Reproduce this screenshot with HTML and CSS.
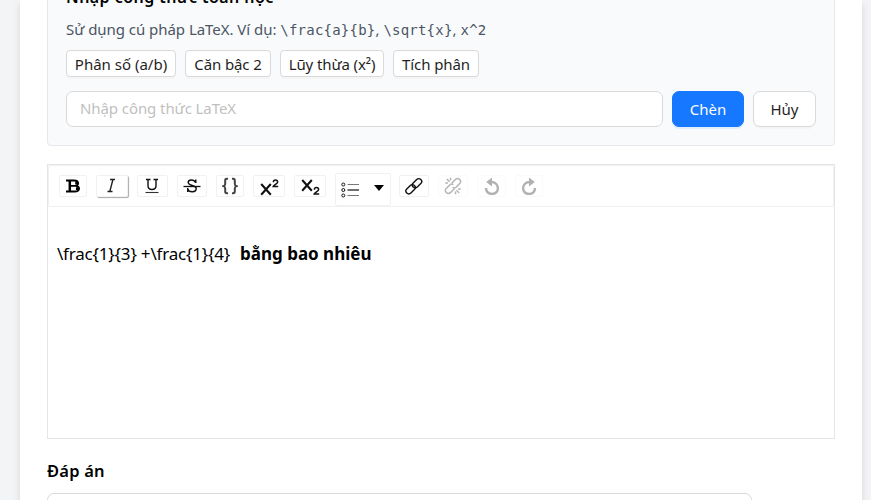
FILE: index.html
```html
<!DOCTYPE html>
<html lang="vi">
<head>
<meta charset="utf-8">
<title>Soạn câu hỏi</title>
<link rel="stylesheet" href="styles.css">
</head>
<body>
<main class="card">
  <section class="panel">
    <h3 class="panel-title">Nhập công thức toán học</h3>
    <p class="hint"><span class="hint-text">Sử dụng cú pháp LaTeX. Ví dụ:</span> <code>\frac{a}{b}</code>, <code>\sqrt{x}</code>, <code>x^2</code></p>
    <div class="presets">
      <button class="btn fraction">Phân số (a/b)</button>
      <button class="btn root">Căn bậc 2</button>
      <button class="btn power">Lũy thừa (x²)</button>
      <button class="btn integral">Tích phân</button>
    </div>
    <div class="entry">
      <input class="field" type="text" placeholder="Nhập công thức LaTeX">
      <button class="btn primary">Chèn</button>
      <button class="btn cancel">Hủy</button>
    </div>
  </section>
  <section class="editor">
    <div class="toolbar">
      <div class="tool w28"><svg width="16" height="14" viewBox="0 0 16 14"><path d="M1 1.5h8.2c5 0 5 5 1.2 5.3 5 .3 5 5.7-.8 5.7H1M4.6 6.9h6" fill="none" stroke="#000" stroke-width="1.9"/><path d="M4.8 1.5v11M11.5 2.8v2.6M12.2 8.3v2.8" stroke="#000" stroke-width="2.5"/></svg></div>
      <div class="tool w32 active"><svg width="12" height="16" viewBox="0 0 12 16"><path d="M4 1.5h5M1.5 13.5h5M6.8 2 3.8 13.5" fill="none" stroke="#222" stroke-width="1.4"/></svg></div>
      <div class="tool w31"><svg class="lift" width="14" height="16" viewBox="0 0 14 16"><path d="M1 1.5h4.5M8.5 1.5H13M3 1.5v6.3c0 5 8 5 8 0V1.5" fill="none" stroke="#111" stroke-width="1.4"/><path d="M.5 14.5h13" stroke="#333" stroke-width="1.1"/></svg></div>
      <div class="tool w30"><svg width="18" height="16" viewBox="0 0 18 16"><path d="M12.8 5V1.5M12.5 4.5C11 1 5.2 1.2 5.2 4.5c0 3.7 8 2.3 8 6 0 4.2-7.2 4.4-8.5.5M4.7 10v4" fill="none" stroke="#111" stroke-width="1.4"/><path d="M.5 8.5h17" stroke="#111" stroke-width="1.3"/></svg></div>
      <div class="tool w28"><svg width="16" height="18" viewBox="0 0 16 18"><path d="M6 1.7H4.8c-1.3 0-1.6.6-1.6 1.8v3.2c0 1.3-.5 2-1.7 2.4 1.2.4 1.7 1.1 1.7 2.4v3c0 1.2.3 1.8 1.6 1.8H6M10 1.7h1.2c1.3 0 1.6.6 1.6 1.8v3.2c0 1.3.5 2 1.7 2.4-1.2.4-1.7 1.1-1.7 2.4v3c0 1.2-.3 1.8-1.6 1.8H10" fill="none" stroke="#444" stroke-width="2"/></svg></div>
      <div class="tool w32"><svg width="20" height="20" viewBox="0 0 20 20"><path d="M2.2 8 11.8 18.7M11.8 8 2.2 18.7" fill="none" stroke="#111" stroke-width="2.1"/><path d="M14.4 6.2c0-2.8 4.2-2.8 4.2 0 0 1.5-3.5 2.6-4.3 4.2h4.9" fill="none" stroke="#111" stroke-width="1.5"/></svg></div>
      <div class="tool w32"><svg width="20" height="20" viewBox="0 0 20 20"><path d="M2.2 4 11.8 14.7M11.8 4 2.2 14.7" fill="none" stroke="#111" stroke-width="2.1"/><path d="M14.4 13.7c0-2.8 4.2-2.8 4.2 0 0 1.5-3.5 2.6-4.3 4.2h4.9" fill="none" stroke="#111" stroke-width="1.5"/></svg></div>
      <div class="tool list"><svg width="19" height="16" viewBox="0 0 19 16"><g fill="none" stroke="#111"><circle cx="2.3" cy="2.5" r="1.5"/><circle cx="2.3" cy="8" r="1.5"/><circle cx="2.3" cy="13.5" r="1.5"/></g><path d="M6.5 2.5H18M6.5 13.5H18" stroke="#777" stroke-width="1.2"/><path d="M6.5 8H18" stroke="#111" stroke-width="1.2"/></svg><svg width="10" height="6" viewBox="0 0 10 6"><path d="M0 0h10L5 6z"/></svg></div>
      <div class="tool w30"><svg width="18" height="18" viewBox="0 0 18 18"><g fill="none" stroke="#111" stroke-width="1.4"><rect x="-5.4" y="-2.9" width="10.8" height="5.8" rx="2.9" transform="translate(12 6.3) rotate(-45)"/><rect x="-5.4" y="-2.9" width="10.8" height="5.8" rx="2.9" transform="translate(5.6 12.3) rotate(-45)"/></g></svg></div>
      <div class="tool w30 disabled"><svg width="18" height="18" viewBox="0 0 18 18"><g fill="none" stroke="#111" stroke-width="1.5"><path d="m7.7 6.3 3.6-3.7c2.9-2.6 7 .8 4.4 4L12 10.2c-1 .9-2.4.9-3.4.2M10.3 11.7l-3.6 3.7c-2.9 2.6-7-.8-4.4-4L6 7.8c1-.9 2.4-.9 3.4-.2M5.5 4.7 2.8 2M6.5 3.5V.8M4 6H1.2M12.5 13.3l2.7 2.7M11.5 14.5v2.7M14 12h2.8"/></g></svg></div>
      <div class="tool w29 disabled"><svg width="16" height="18" viewBox="0 0 16 18"><path d="M7 5c9 0 9 12 1 12-4 0-6-3-6-6" fill="none" stroke="#000" stroke-width="2.4"/><path d="M8 .5v9L2.2 5z"/></svg></div>
      <div class="tool w28 disabled"><svg width="16" height="18" viewBox="0 0 16 18"><path d="M9 5c-9 0-9 12-1 12 4 0 6-3 6-6" fill="none" stroke="#000" stroke-width="2.4"/><path d="M8 .5v9l5.8-4.5z"/></svg></div>
    </div>
    <div class="content"><span class="formula">\frac{1}{3} +\frac{1}{4}</span><strong>bằng bao nhiêu</strong></div>
  </section>
  <label class="answer-label" for="answer">Đáp án</label>
  <input class="field answer" id="answer" type="text">
</main>
</body>
</html>
```
FILE: styles.css
```css
* { box-sizing: border-box; }
body {
  margin: 0;
  height: 500px;
  overflow: hidden;
  background: #f3f4f6;
  font-family: "Noto Sans", "Open Sans", sans-serif;
  font-size: 15px;
  color: #000;
}
.card {
  display: flow-root;
  width: 842px;
  height: 540px;
  margin-left: 20px;
  padding: 0 27px;
  background: #fff;
  box-shadow: 0 4px 7px rgba(0, 0, 0, .13);
}
.panel {
  height: 176px;
  margin-top: -30px;
  padding: 13px 18px 18px;
  background: #f9fafb;
  border: 1px solid #e5e7eb;
  border-radius: 4px;
}
.panel-title {
  margin: 0;
  height: 27px;
  font-size: 16px;
  font-weight: 600;
  line-height: 27px;
  letter-spacing: .45px;
  white-space: nowrap;
}
.hint {
  margin: 7px 0 0;
  height: 22px;
  color: #4b5563;
  font-size: 15px;
  line-height: 22px;
  white-space: nowrap;
}
.hint-text { letter-spacing: -.04px; }
code {
  font-family: "DejaVu Sans Mono", "Liberation Mono", monospace;
  font-size: 14px;
  letter-spacing: .22px;
}
.presets { display: flex; gap: 9px; margin-top: 10px; }
.btn {
  height: 27px;
  padding: 1px 0 0;
  border: 1px solid #d9d9d9;
  border-radius: 4px;
  background: #fff;
  box-shadow: 0 2px 0 rgba(0, 0, 0, .02);
  color: #1f1f1f;
  font: inherit;
  line-height: 24px;
  white-space: nowrap;
}
.fraction { width: 110px; }
.root { width: 86px; letter-spacing: -.1px; }
.power { width: 104px; letter-spacing: -.1px; }
.integral { width: 86px; letter-spacing: -.1px; }
.entry { display: flex; gap: 9px; margin-top: 14px; }
.field {
  flex: 1;
  height: 36px;
  min-width: 0;
  padding: 0 13px 2px;
  border: 1px solid #d9d9d9;
  border-radius: 7px;
  background: #fff;
  font: inherit;
  letter-spacing: -.08px;
}
.field::placeholder { color: #bfbfbf; }
.primary, .cancel { height: 36px; padding: 0; border-radius: 7px; line-height: 34px; }
.primary {
  width: 72px;
  border-color: #1677ff;
  background: #1677ff;
  color: #fff;
  box-shadow: 0 2px 0 rgba(5, 145, 255, .1);
}
.cancel { width: 63px; }
.editor { height: 275px; margin-top: 18px; border: 1px solid #e5e5e5; }
.toolbar {
  display: flex;
  align-items: flex-start;
  gap: 9px;
  height: 42px;
  padding: 9px 10px 0;
  border: 1px solid #f0f0f0;
  border-radius: 2px;
}
.tool {
  display: flex;
  flex: none;
  align-items: center;
  justify-content: center;
  height: 22px;
  border: 1px solid #f1f1f1;
  border-radius: 2px;
}
.tool svg { flex: none; }
.tool .lift { margin: -1px 2px 0 0; }
.w28 { width: 28px; }
.w29 { width: 29px; }
.w30 { width: 30px; }
.w31 { width: 31px; }
.w32 { width: 32px; }
.active { box-shadow: 1px 1px 1px #aaa; }
.list {
  width: 56px;
  height: 33px;
  margin: -2px -1px 0 0;
  padding: 0 6px 0 5px;
  justify-content: space-between;
}
.list svg:last-child { margin-top: -3px; }
.disabled { opacity: .3; }
.content {
  height: 93px;
  padding: 34px 9px 0;
  font-size: 17px;
  line-height: 26px;
  white-space: pre;
}
.formula { display: inline-block; width: 183px; letter-spacing: -.2px; }
.content strong { font-weight: 700; }
.answer-label {
  display: block;
  height: 27px;
  margin-top: 18px;
  font-size: 16.5px;
  font-weight: 600;
  line-height: 27px;
  letter-spacing: .2px;
}
.answer { display: block; width: 705px; margin-top: 9px; }
```
